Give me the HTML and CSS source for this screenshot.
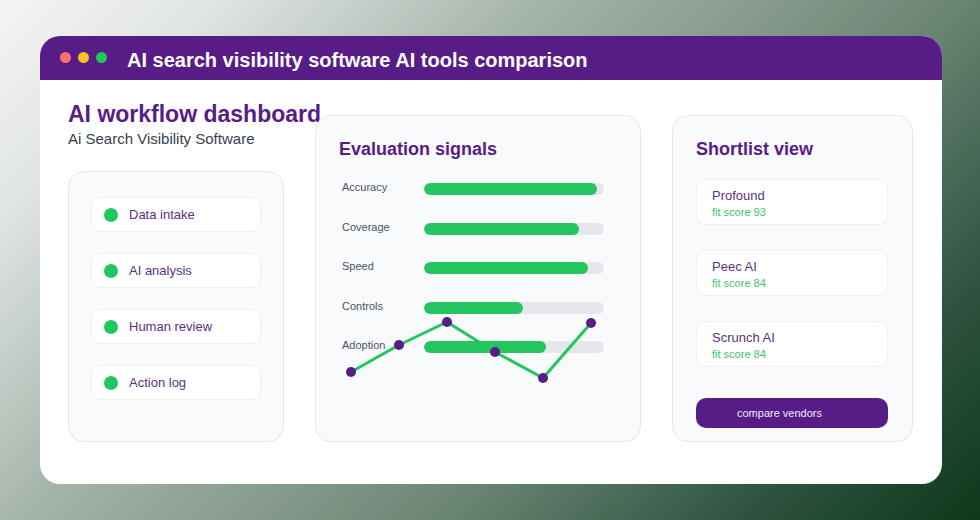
FILE: index.html
```html
<!DOCTYPE html>
<html>
<head>
<meta charset="utf-8">
<link rel="stylesheet" href="styles.css">
</head>
<body>
<div class="window">
  <div class="titlebar">
    <div class="dots"><span class="dot red"></span><span class="dot yellow"></span><span class="dot green"></span></div>
    <div class="wtitle">AI search visibility software AI tools comparison</div>
  </div>
  <div class="content">
    <div class="col-left">
      <h1 class="dash-title">AI workflow dashboard</h1>
      <div class="dash-sub">Ai Search Visibility Software</div>
      <div class="panel steps">
        <div class="step"><span class="sdot"></span>Data intake</div>
        <div class="step"><span class="sdot"></span>AI analysis</div>
        <div class="step"><span class="sdot"></span>Human review</div>
        <div class="step"><span class="sdot"></span>Action log</div>
      </div>
    </div>
    <div class="panel signals">
      <h2 class="ptitle">Evaluation signals</h2>
      <div class="rows">
        <div class="row"><span class="lbl">Accuracy</span><span class="track"><span class="fill" style="width:96%"></span></span></div>
        <div class="row"><span class="lbl">Coverage</span><span class="track"><span class="fill" style="width:86%"></span></span></div>
        <div class="row"><span class="lbl">Speed</span><span class="track"><span class="fill" style="width:91%"></span></span></div>
        <div class="row"><span class="lbl">Controls</span><span class="track"><span class="fill" style="width:55%"></span></span></div>
        <div class="row"><span class="lbl">Adoption</span><span class="track"><span class="fill" style="width:68%"></span></span></div>
      </div>
      <svg class="spark" width="326" height="327" viewBox="0 0 326 327">
        <polyline points="35,256 83,229 131,206 179,236 227,262 275,207" fill="none" stroke="#22c55e" stroke-width="3" stroke-linejoin="round"/>
        <g fill="#581c87">
          <circle cx="35" cy="256" r="5"/>
          <circle cx="83" cy="229" r="5"/>
          <circle cx="131" cy="206" r="5"/>
          <circle cx="179" cy="236" r="5"/>
          <circle cx="227" cy="262" r="5"/>
          <circle cx="275" cy="207" r="5"/>
        </g>
      </svg>
    </div>
    <div class="panel shortlist">
      <h2 class="ptitle">Shortlist view</h2>
      <div class="cards">
        <div class="card"><div class="cname">Profound</div><div class="cscore">fit score 93</div></div>
        <div class="card"><div class="cname">Peec AI</div><div class="cscore">fit score 84</div></div>
        <div class="card"><div class="cname">Scrunch AI</div><div class="cscore">fit score 84</div></div>
      </div>
      <div class="btn">compare vendors</div>
    </div>
  </div>
</div>
</body>
</html>
```

FILE: styles.css
```css
* { box-sizing: border-box; }
html, body { margin: 0; padding: 0; }
body {
  width: 980px;
  height: 520px;
  overflow: hidden;
  font-family: "Liberation Sans", Arial, sans-serif;
  background: linear-gradient(135deg, #f4f5f6 0%, #dfe4e2 15%, #a5b4aa 36%, #6b8574 64%, #2e5340 84%, #0d381b 100%);
  padding: 36px 38px 36px 40px;
}
.window {
  width: 902px;
  height: 448px;
  background: #ffffff;
  border-radius: 20px;
  overflow: hidden;
  display: flex;
  flex-direction: column;
}
.titlebar {
  height: 44px;
  background: #581c87;
  display: flex;
  align-items: center;
  padding-left: 20px;
}
.dots { display: flex; gap: 7px; margin-top: -2px; }
.dot { width: 11px; height: 11px; border-radius: 50%; display: block; }
.red { background: #f87171; }
.yellow { background: #fbbf24; }
.green { background: #22c55e; }
.wtitle {
  color: #ffffff;
  font-weight: 700;
  font-size: 20px;
  margin-left: 20px;
  padding-top: 5px;
}
.content {
  flex: 1;
  display: grid;
  grid-template-columns: 216px 326px 241px;
  column-gap: 31px;
  padding: 35px 28px 42px 28px;
}
.col-left { display: flex; flex-direction: column; }
.dash-title {
  margin: 0;
  font-size: 23px;
  line-height: 26px;
  font-weight: 700;
  color: #581c87;
  white-space: nowrap;
  margin-top: -14px;
}
.dash-sub {
  font-size: 15px;
  color: #374151;
  margin-top: 3px;
  line-height: 18px;
}
.panel {
  background: #f8fafc;
  border: 1px solid #e5e7eb;
  border-radius: 16px;
}
.steps {
  margin-top: 23px;
  flex: 1;
  padding: 25px 22px 0 22px;
  display: flex;
  flex-direction: column;
  gap: 21px;
}
.step {
  height: 35px;
  background: #ffffff;
  border: 1px solid #eef0f3;
  border-radius: 10px;
  display: flex;
  align-items: center;
  padding-left: 12px;
  font-size: 13px;
  color: #5a3282;
}
.sdot {
  width: 14px; height: 14px; border-radius: 50%;
  background: #22c55e;
  margin-right: 11px;
}
.signals { position: relative; padding: 22px 36px 0 23px; }
.ptitle {
  margin: 0;
  font-size: 18px;
  line-height: 22px;
  font-weight: 700;
  color: #581c87;
}
.rows { margin-top: 23px; display: flex; flex-direction: column; gap: 27.5px; }
.row { display: flex; align-items: center; height: 12px; }
.lbl { width: 85px; font-size: 11px; color: #4b5563; padding-left: 3px; position: relative; top: -2px; }
.track {
  flex: 1;
  height: 12px;
  background: #e5e7eb;
  border-radius: 6px;
  overflow: hidden;
  display: block;
}
.fill { display: block; height: 100%; background: #22c55e; border-radius: 6px; }
.spark { position: absolute; left: 0; top: 0; }
.shortlist {
  padding: 22px 24px 0 23px;
  display: flex;
  flex-direction: column;
}
.cards { margin-top: 19px; display: flex; flex-direction: column; gap: 25px; }
.card {
  height: 46px;
  background: #ffffff;
  border: 1px solid #eef0f3;
  border-radius: 10px;
  padding: 8px 15px 0 15px;
}
.cname { font-size: 13px; line-height: 16px; color: #5a3282; }
.cscore { font-size: 11px; line-height: 14px; color: #3cc46b; margin-top: 1px; }
.btn {
  margin-top: 31px;
  height: 30px;
  background: #581c87;
  border-radius: 10px;
  color: #f3e8ff;
  font-size: 11px;
  display: flex;
  align-items: center;
  padding-left: 41px;
}
```
